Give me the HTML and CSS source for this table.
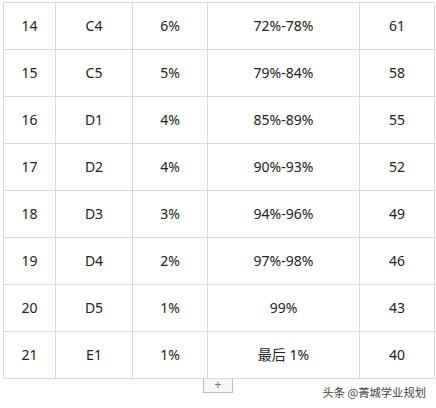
FILE: index.html
```html
<!DOCTYPE html>
<html>
<head>
<meta charset="utf-8">
<link rel="stylesheet" href="styles.css">
</head>
<body>
<table class="grid">
  <colgroup>
    <col class="c1"><col class="c2"><col class="c3"><col class="c4"><col class="c5">
  </colgroup>
  <tr><td>14</td><td>C4</td><td>6%</td><td>72%-78%</td><td>61</td></tr>
  <tr><td>15</td><td>C5</td><td>5%</td><td>79%-84%</td><td>58</td></tr>
  <tr><td>16</td><td>D1</td><td>4%</td><td>85%-89%</td><td>55</td></tr>
  <tr><td>17</td><td>D2</td><td>4%</td><td>90%-93%</td><td>52</td></tr>
  <tr><td>18</td><td>D3</td><td>3%</td><td>94%-96%</td><td>49</td></tr>
  <tr><td>19</td><td>D4</td><td>2%</td><td>97%-98%</td><td>46</td></tr>
  <tr><td>20</td><td>D5</td><td>1%</td><td>99%</td><td>43</td></tr>
  <tr><td>21</td><td>E1</td><td>1%</td><td>最后 1%</td><td>40</td></tr>
</table>
<div class="foot">
  <div class="add">+</div>
  <div class="mark">头条 @菁城学业规划</div>
</div>
</body>
</html>
```
FILE: styles.css
```css
html, body {
  margin: 0;
  padding: 0;
  background: #fff;
}
body {
  font-family: "Noto Sans", "Noto Sans CJK SC", sans-serif;
  color: #222;
  width: 436px;
  height: 408px;
  overflow: hidden;
}
.grid {
  border-collapse: collapse;
  table-layout: fixed;
  width: 432px;
  margin: 2px 0 0 3px;
}
.c1 { width: 52px; }
.c2 { width: 77px; }
.c3 { width: 75px; }
.c4 { width: 152px; }
.c5 { width: 75px; }
.grid td {
  border: 1px solid #dadada;
  height: 46px;
  padding: 0;
  text-align: center;
  font-size: 14px;
  line-height: 16px;
}
.foot {
  display: flex;
  align-items: flex-start;
}
.add {
  margin-left: 203px;
  width: 28px;
  height: 13px;
  border: 1px solid #bdbdbd;
  border-top: none;
  background: #f7f7f7;
  font-size: 12px;
  line-height: 12px;
  text-align: center;
  color: #777;
}
.mark {
  margin-left: auto;
  margin-right: 10px;
  margin-top: 6px;
  font-family: "Noto Sans CJK SC", sans-serif;
  font-size: 11.3px;
  line-height: 14px;
  color: #444;
}
```
